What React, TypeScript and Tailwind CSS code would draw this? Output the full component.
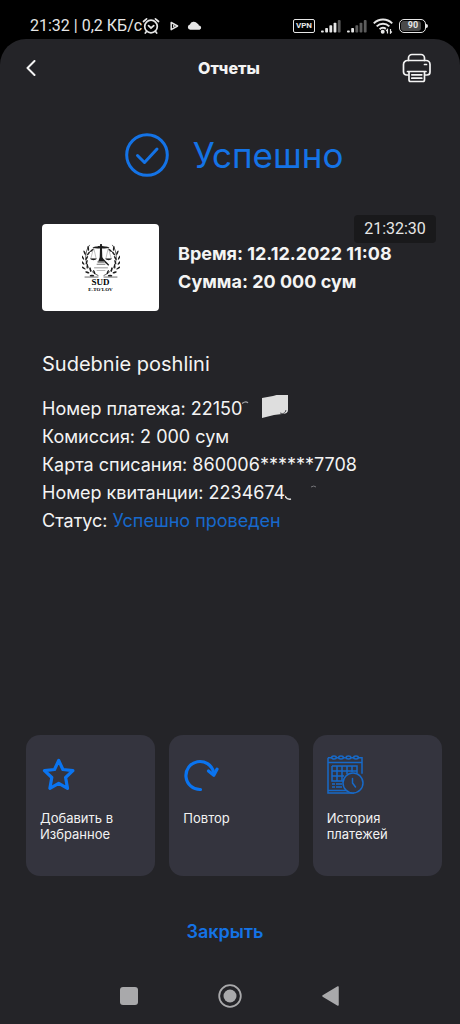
import type { ReactNode } from "react";

const StatusBar = () => (
  <div className="flex h-[39px] items-center justify-between bg-black pl-[30px] pr-8 pt-3 font-['Roboto',sans-serif] text-[#e6e6e6]">
    <div className="flex items-center">
      <span className="whitespace-nowrap text-[16px] leading-5">21:32 | 0,2 КБ/с</span>
      <svg className="size-[18px]" viewBox="0 0 18 18" fill="none" stroke="currentColor" strokeWidth="1.7" strokeLinecap="round" aria-hidden="true">
        <circle cx="9" cy="9.5" r="6.3" />
        <path d="M1.5 4.5 4.6 1.8M16.5 4.5l-3.1-2.700M6.5 8.7 9 11l2.8-2.3M4.5 14.5 3.3 16M13.5 14.5l1.2 1.5" />
      </svg>
      <svg className="ml-2.5 h-[10px] w-[9px]" viewBox="0 0 9 10" aria-hidden="true">
        <path d="M1.2 1.5 7.6 5 1.2 8.6z" fill="none" stroke="currentColor" strokeWidth="1.5" strokeLinejoin="round" />
        <path d="M3 3.7 5.2 5 3 6.3z" fill="currentColor" />
      </svg>
      <svg className="ml-2 h-[9px] w-[15px]" viewBox="0 0 15 9" fill="currentColor" aria-hidden="true">
        <path d="M3.2 8.8a2.7 2.7 0 0 1-.3-5.3A4.1 4.1 0 0 1 10.3 2.6a2.5 2.5 0 0 1 1.6 1.9 2.2 2.2 0 0 1 .7 4.3z" />
      </svg>
    </div>
    <div className="flex items-center">
      <span className="flex h-[14px] w-[22px] items-center justify-center rounded-[2px] border-[1.5px] border-current text-[8px] font-bold">
        VPN
      </span>
      <Signal bars={4} />
      <Signal bars={2} />
      <svg className="ml-1.5 h-[16px] w-[20px]" viewBox="0 0 20 16" fill="none" stroke="currentColor" strokeWidth="2" aria-hidden="true">
        <path d="M.8 5.4a13 13 0 0 1 18.4 0M3.7 8.4a9 9 0 0 1 12.6 0M6.600 11.2a5 5 0 0 1 6.3-.3" />
        <circle cx="9.7" cy="13.7" r="1" fill="currentColor" />
        <path strokeWidth="1.2" d="M14.5 15.5v-4l-1.3 1.5M17.5 11v4l1.3-1.5" />
      </svg>
      <div className="ml-1.5 flex items-center">
        <span className="flex h-[14px] w-[27px] rounded-[5px] border-[1.5px] border-current p-px">
          <span className="flex w-[20px] items-center justify-center rounded-[3px] bg-[#4a4a4a] pl-1 text-[9px] font-bold">90</span>
        </span>
        <span className="h-1 w-0.5 rounded-r-sm bg-current" />
      </div>
    </div>
  </div>
);

const Signal = ({ bars }: { bars: number }) => (
  <svg className="ml-[5px] h-[14px] w-[21px]" viewBox="0 0 21 14" fill="currentColor" aria-hidden="true">
    {[0, 1, 2, 3, 4].map((i) => (
      <rect
        key={i}
        x={1 + i * 4.2}
        y={11.5 - i * 2.6}
        width="2.8"
        height={2 + i * 2.6}
        rx="0.8"
        opacity={i < bars ? 1 : 0.4}
      />
    ))}
  </svg>
);

const PrinterIcon = () => (
  <svg className="size-[30px]" viewBox="0 0 30 30" fill="none" stroke="currentColor" strokeWidth="1.7" strokeLinejoin="round" strokeLinecap="round" aria-hidden="true">
    <path d="M6.5 7.5V5A3.5 3.5 0 0 1 10 1.5h9A3.5 3.5 0 0 1 22.5 5v2.5" />
    <path d="M6 22H4.5a3 3 0 0 1-3-3v-7.5a4 4 0 0 1 4-4H24a4 4 0 0 1 4 4V19a3 3 0 0 1-3 3h-2" />
    <path d="M5.5 18.5H24M7 18.5v8.3c0 1 .6 1.7 1.6 1.7h12.300c1 0 1.6-.7 1.6-1.7v-8.3M9.800 21.800h10M9.800 25.200h10M22.5 11.5h2" />
  </svg>
);

const SudLogo = () => {
  const leaves = [
    [9, 7, -20],
    [5, 11, -5],
    [3, 16, 0],
    [3, 21, 15],
    [4, 26, 30],
    [8, 30, 45],
    [13, 33, 60],
  ];
  const branch = (
    <g>
      <path d="M9 2C2 10 1 27 19 34.5" fill="none" stroke="#222" strokeWidth="0.8" />
      {leaves.map(([x, y, angle]) => (
        <g key={y} transform={`translate(${x} ${y}) rotate(${-angle})`}>
          <ellipse cx="-1.5" cy="-1.5" rx="0.9" ry="2.6" transform="rotate(-30)" />
          <ellipse cx="2" cy="-1.5" rx="0.9" ry="2.5" transform="rotate(35)" />
        </g>
      ))}
    </g>
  );

  return (
    <svg className="h-[35px] w-[38px]" viewBox="0 0 44 37" preserveAspectRatio="none" fill="#1c1c1c" aria-hidden="true">
      {branch}
      <g transform="matrix(-1 0 0 1 44 0)">{branch}</g>
      <path d="M12 5c4-2 7-.5 10-2.5C25 4.5 28 3 32 5c-4 1-7 1-10 .5C19 6 16 6 12 5z" />
      <path d="M21 1h2l.5 14L25 19h-6l1.5-4z" />
      <path d="M13.5 5 10 17h6.500zM30.5 5l-3 12H34z" fill="none" stroke="#777" strokeWidth="0.5" />
      <path d="M9.5 16.5H17c-1.500 2.400-6 2.400-7.500 0zM27 16.500h7.500c-1.500 2.400-6 2.400-7.500 0z" />
      <path d="m23 15 8.500 8-1 1L22 17z" />
      <path d="M18 19h8v2h-8zM17 22h10v1H17zM14 26h16v.8H14zM17 28.5h10v.5H17z" fill="#777" />
      <path d="M3 36h16M25 36h16" stroke="#333" strokeWidth="0.8" />
    </svg>
  );
};

const StarIcon = () => (
  <svg className="size-9" viewBox="0 0 36 36" fill="none" stroke="#0a74f0" strokeWidth="3.2" strokeLinejoin="round" aria-hidden="true">
    <path d="m18.7 3.500 4.200 9 10 1.200-7.300 6.800 1.900 10.800-8.800-5-8.800 5 1.900-10.800L4.500 13.700l10-1.200z" />
  </svg>
);

const RepeatIcon = () => (
  <svg className="size-9" viewBox="0 0 36 36" fill="none" stroke="#0a74f0" strokeWidth="3.2" strokeLinejoin="round" strokeLinecap="round" aria-hidden="true">
    <path d="M17.500 32.500A14 14 0 1 1 30.500 15" />
    <path d="m25.500 14 5.300 4.200 3.200-6" />
  </svg>
);

const HistoryIcon = () => (
  <svg className="h-10 w-[37px]" viewBox="0 0 37 40" fill="none" stroke="#1769c8" strokeWidth="1.5" aria-hidden="true">
    <path d="M1 2.800h34v16M1 2.800V38h26M1 35.500h20M1 7.500h34" />
    <path d="M5 11h25v7M5 11v15h11M5 16h25M5 21h12M10 11v15M15 11v15M20 11v8M25 11v6M5 29h3M9 29h6M5 32h3M9 32h6" />
    {[7, 14, 21.5, 29].map((x) => (
      <ellipse key={x} cx={x} cy="2.500" rx="2.300" ry="1.500" fill="#34343e" />
    ))}
    <circle cx="26" cy="28" r="10" fill="#34343e" />
    <path d="M25.500 23.500v4.500l3 4" strokeLinecap="round" />
  </svg>
);

const Action = ({ icon, children }: { icon: ReactNode; children: ReactNode }) => (
  <button
    type="button"
    className="flex h-[141px] flex-col items-start rounded-[14px] bg-[#34343e] px-3.5 pt-5 text-left text-[13px] leading-4 text-[#f2f2f2]"
  >
    <span className="mb-[15px] flex h-10 items-center">{icon}</span>
    {children}
  </button>
);

export default function App() {
  return (
    <div className="min-h-screen bg-black">
      <StatusBar />
      <div className="relative flex min-h-[calc(100vh-39px)] flex-col rounded-t-[26px] bg-[#242428] font-['Inter',sans-serif] text-[#f4f4f4]">
        <header className="grid h-[58px] grid-cols-[1fr_auto_1fr] items-center pl-[26px] pr-7">
          <button type="button" aria-label="Назад">
            <svg className="h-4 w-2.5" viewBox="0 0 10 16" fill="none" stroke="currentColor" strokeWidth="2" strokeLinecap="round" strokeLinejoin="round" aria-hidden="true">
              <path d="M8.500 1 1.500 8l7 7" />
            </svg>
          </button>
          <h1 className="text-[16px] font-extrabold">Отчеты</h1>
          <button type="button" aria-label="Печать" className="justify-self-end">
            <PrinterIcon />
          </button>
        </header>

        <div className="absolute right-6 top-[176px] flex h-7 w-[82px] items-center justify-center rounded bg-[#19191b] font-['Roboto',sans-serif] text-[16px] text-[#e6e6e6]">
          21:32:30
        </div>

        <main className="flex grow flex-col">
          <div className="mt-9 flex items-center justify-center gap-6 pl-2 text-[#1473e6]">
            <svg className="size-11" viewBox="0 0 44 44" fill="none" stroke="currentColor" strokeWidth="3" strokeLinecap="round" strokeLinejoin="round" aria-hidden="true">
              <circle cx="22" cy="22" r="20.300" />
              <path d="m12.500 22.500 7 7L32 16" />
            </svg>
            <p className="text-[35px] leading-[44px]">Успешно</p>
          </div>

          <section className="mt-[47px] flex items-center gap-[19px] px-[42px]">
            <div className="flex h-[87px] w-[117px] shrink-0 flex-col items-center rounded bg-white pt-[19px] font-['Liberation_Serif',serif] font-bold text-black">
              <SudLogo />
              <span className="text-[9px] leading-[9px]">SUD</span>
              <span className="text-[5px] leading-[5px]">E-TO'LOV</span>
            </div>
            <div className="whitespace-nowrap text-[18px] font-bold leading-7">
              <p>Время: 12.12.2022 11:08</p>
              <p>Сумма: 20 000 сум</p>
            </div>
          </section>

          <section className="mt-[39px] px-[42px]">
            <h2 className="text-[20px] leading-7">Sudebnie poshlini</h2>
            <div className="mt-[17px] whitespace-nowrap text-[18px] leading-7">
              <p className="flex items-center">
                Номер платежа: 22150
                <svg className="h-7 w-[52px]" viewBox="2 0 52 28" aria-hidden="true">
                  <path d="M2 8.500q4-3 6-.500" fill="none" stroke="#a5a5a8" strokeWidth="1.200" />
                  <path d="M22 3 33 1q9-3 15-1v15q0 4-6 4l-8 1-12 3z" fill="#dedede" />
                  <path d="M40 18q5 2 6-3" fill="none" stroke="#55555a" />
                </svg>
              </p>
              <p>Комиссия: 2 000 сум</p>
              <p>Карта списания: 860006******7708</p>
              <p className="flex items-center">
                Номер квитанции: 2234674
                <svg className="h-7 w-[36px]" viewBox="0 0 36 28" aria-hidden="true">
                  <path d="M0 17q2 4 6 3" fill="none" stroke="#dedede" strokeWidth="1.500" />
                  <path d="M26 8q3-2 5 0" fill="none" stroke="#77777b" />
                </svg>
              </p>
              <p>
                Статус: <span className="text-[#1769cc]">Успешно проведен</span>
              </p>
            </div>
          </section>

          <div className="mt-auto grid grid-cols-3 gap-3.5 pl-[26px] pr-[18px]">
            <Action icon={<StarIcon />}>
              Добавить в<br />
              Избранное
            </Action>
            <Action icon={<RepeatIcon />}>Повтор</Action>
            <Action icon={<HistoryIcon />}>
              История
              <br />
              платежей
            </Action>
          </div>
          <button type="button" className="mt-[42px] self-center pr-2.5 text-[18px] font-semibold leading-7 text-[#1473e6]">
            Закрыть
          </button>
        </main>

        <nav className="mt-[22px] flex h-14 items-center justify-center gap-20 pr-0.5 text-[#a9a9ab]">
          <button type="button" aria-label="Недавние">
            <span className="block size-[18px] rounded-[3px] bg-current" />
          </button>
          <button type="button" aria-label="Домой">
            <svg className="size-6" viewBox="0 0 24 24" aria-hidden="true">
              <circle cx="12" cy="12" r="10.800" fill="none" stroke="currentColor" strokeWidth="1.800" />
              <circle cx="12" cy="12" r="6.500" fill="currentColor" />
            </svg>
          </button>
          <button type="button" aria-label="Назад в приложение">
            <svg className="h-5 w-[17px]" viewBox="0 0 17 20" fill="currentColor" stroke="currentColor" strokeWidth="1.500" strokeLinejoin="round" aria-hidden="true">
              <path d="M1 10 16 1v18z" />
            </svg>
          </button>
        </nav>
      </div>
    </div>
  );
}
